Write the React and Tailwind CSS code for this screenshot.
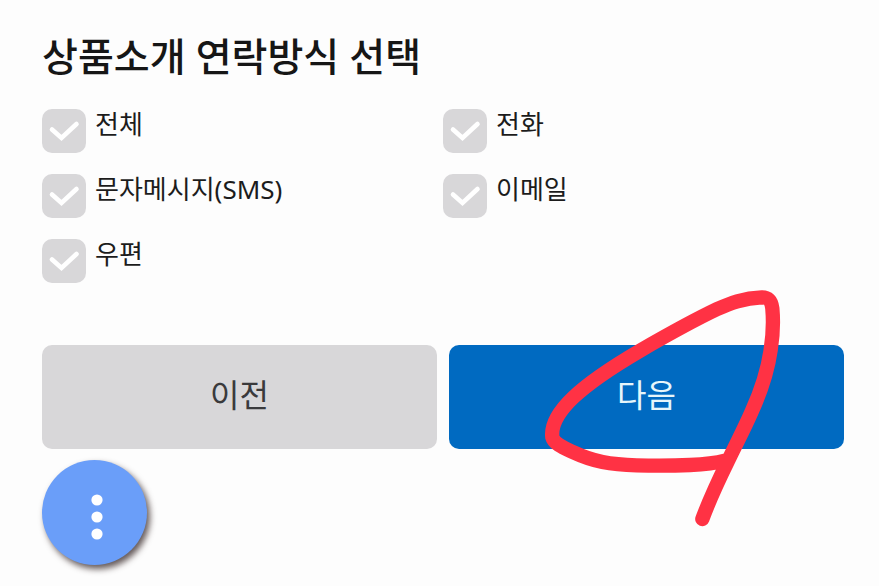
import React, { useState } from 'react';

const METHODS = [
  { id: 'all', label: '전체' },
  { id: 'phone', label: '전화' },
  { id: 'sms', label: '문자메시지(SMS)' },
  { id: 'email', label: '이메일' },
  { id: 'post', label: '우편' },
];

const MethodCheckbox = ({ id, label, checked, onChange }) => (
  <div className="flex items-start gap-[9px]">
    <span className="relative h-11 w-11 shrink-0">
      <input
        id={id}
        type="checkbox"
        checked={checked}
        onChange={onChange}
        className="block h-11 w-11 cursor-pointer appearance-none rounded-[10px] bg-[#d8d7d9] checked:bg-[#006ac1]"
      />
      <svg
        viewBox="0 0 44 44"
        className="pointer-events-none absolute inset-0 h-11 w-11"
        fill="none"
        stroke="white"
        strokeWidth="4.6"
        strokeLinecap="round"
        aria-hidden="true"
      >
        <path d="M10 20.5 L19.5 29 L34.5 15" />
      </svg>
    </span>
    <label htmlFor={id} className="cursor-pointer text-[26px] leading-[30px] text-[#1c1c1c]">
      {label}
    </label>
  </div>
);

export default function App() {
  const [selected, setSelected] = useState([]);

  const toggle = (id) => {
    setSelected(
      selected.includes(id) ? selected.filter((item) => item !== id) : [...selected, id]
    );
  };

  return (
    <main className="min-h-screen bg-[#fdfdfd] pt-8 pr-[35px] pb-5 pl-[42px] font-['Noto_Sans','Noto_Sans_CJK_KR',sans-serif]">
      <h1 className="text-[39px] leading-[48px] font-medium text-[#161616]">
        상품소개 연락방식 선택
      </h1>

      <div className="mt-[29px] grid grid-cols-2 gap-y-[21px]">
        {METHODS.map((method) => (
          <MethodCheckbox
            key={method.id}
            id={method.id}
            label={method.label}
            checked={selected.includes(method.id)}
            onChange={() => toggle(method.id)}
          />
        ))}
      </div>

      <div className="mt-[62px] grid grid-cols-2 gap-3">
        <button
          type="button"
          className="h-26 rounded-[10px] bg-[#d8d7d9] pb-1 text-[32px] leading-10 text-[#3a3a3c]"
        >
          이전
        </button>
        <div className="relative">
          <button
            type="button"
            className="h-26 w-full rounded-[10px] bg-[#006ac1] pb-1 text-[32px] leading-10 text-[#e6f6fb]"
          >
            다음
          </button>
          {/* Hand-drawn loop around the next button */}
          <svg
            viewBox="0 0 990 780"
            className="pointer-events-none absolute -top-[65px] left-[81px] h-[260px] w-[330px]"
            fill="none"
            stroke="#ff3244"
            strokeWidth="43"
            strokeLinecap="round"
            strokeLinejoin="round"
            aria-hidden="true"
          >
            <path d="M517 717 C540 655 567 598 593 545 C618 492 642 448 665 395 C690 340 712 280 722 210 C730 160 731 130 727 85 C724 62 718 52 695 52 C640 54 600 70 560 88 C480 126 410 166 330 212 C260 253 185 300 130 352 C88 392 62 432 67 472 C72 492 100 503 130 517 C190 545 240 554 320 556 C370 557 430 557 480 555 C525 553 555 550 585 542" />
          </svg>
        </div>
      </div>

      <button
        type="button"
        aria-label="더보기"
        className="mt-[11px] flex h-[105px] w-[105px] items-center justify-center rounded-full bg-[#6a9ef9] shadow-[3px_4px_6px_rgba(50,35,35,0.75)]"
      >
        <svg viewBox="0 0 105 105" className="h-full w-full" fill="white" aria-hidden="true">
          <circle cx="55" cy="40" r="5.6" />
          <circle cx="55" cy="57" r="5.6" />
          <circle cx="55" cy="74" r="5.6" />
        </svg>
      </button>
    </main>
  );
}
